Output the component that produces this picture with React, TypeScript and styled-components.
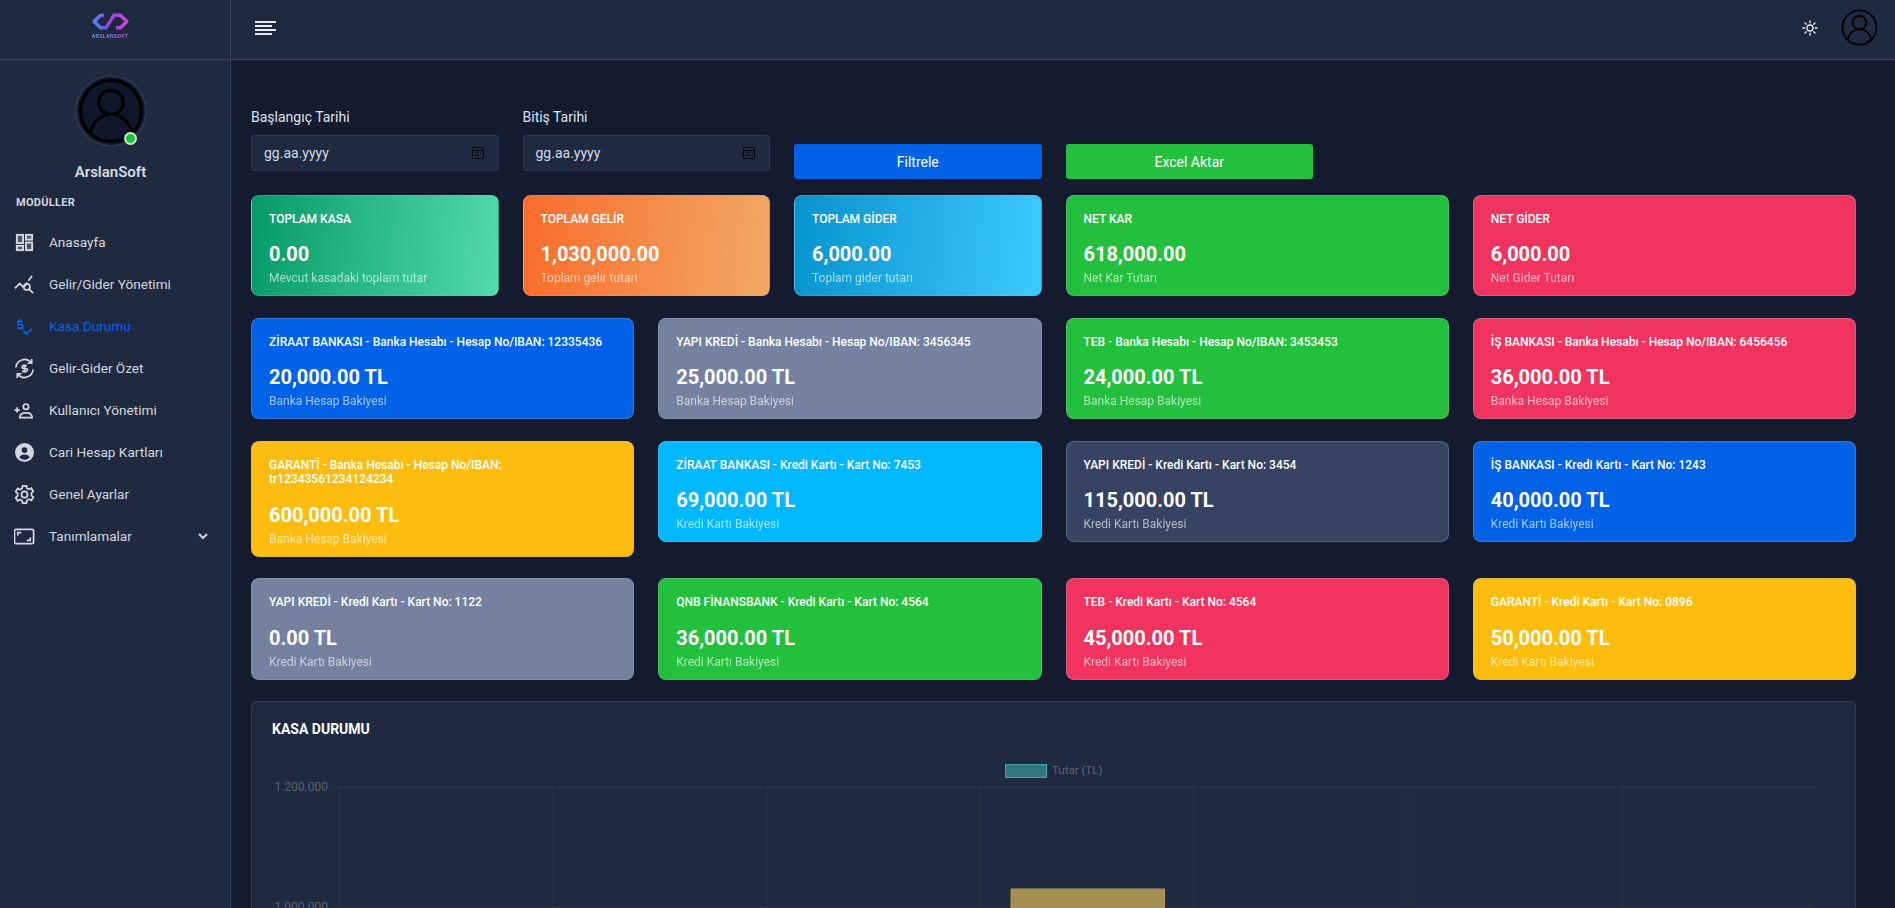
import React from 'react';
import styled, { createGlobalStyle } from 'styled-components';

const COLORS: Record<string, string> = {
  blue: '#0062e6',
  slate: '#74819f',
  green: '#23c03d',
  pink: '#f1345f',
  yellow: '#fdbd0e',
  cyan: '#00b8ff',
  navy: '#374362',
  kasa: 'linear-gradient(95deg, #079b6a 0%, #52d9a9 100%)',
  gelir: 'linear-gradient(95deg, #f96c2a 0%, #f1a865 100%)',
  gider: 'linear-gradient(95deg, #0793cd 0%, #3cc9fd 100%)',
};

const GlobalStyle = createGlobalStyle`
  html, body {
    margin: 0;
    height: 100%;
    overflow: hidden;
    background: #151b2f;
    font-family: Roboto, "Liberation Sans", sans-serif;
  }
  * { box-sizing: border-box; }
`;

const Layout = styled.div`
  display: flex;
  width: 1895px;
  height: 908px;
  overflow: hidden;
`;

const Sidebar = styled.aside`
  flex: 0 0 231px;
  background: #1f2a40;
  border-right: 1px solid #3a4459;
  color: #d3d7df;
`;

const LogoBar = styled.div`
  height: 60px;
  border-bottom: 1px solid #3a4459;
  display: flex;
  flex-direction: column;
  align-items: center;
  padding: 13px 10px 0 0;
`;

const LogoText = styled.span`
  font-size: 5px;
  font-weight: 700;
  letter-spacing: 0.5px;
  line-height: 6px;
  margin-top: 3px;
  background: linear-gradient(90deg, #5aa0f0, #c85ee8);
  -webkit-background-clip: text;
  background-clip: text;
  color: transparent;
`;

const Profile = styled.div`
  display: flex;
  flex-direction: column;
  align-items: center;
  padding: 15px 9px 0 0;
`;

const AvatarRing = styled.div`
  position: relative;
  width: 72px;
  height: 72px;
  border-radius: 50%;
  background: #10172a;
  border: 2px solid #2c3549;
  display: flex;
  align-items: center;
  justify-content: center;
`;

const OnlineDot = styled.span`
  position: absolute;
  right: 8px;
  bottom: 0;
  width: 13px;
  height: 13px;
  border-radius: 50%;
  background: #23c03d;
  border: 2px solid #cfe8d4;
`;

const ProfileName = styled.div`
  margin-top: 15px;
  font-size: 15px;
  font-weight: 600;
  line-height: 20px;
  color: #d9dce3;
`;

const SectionLabel = styled.div`
  margin: 14px 0 0 16px;
  font-size: 11px;
  line-height: 14px;
  font-weight: 700;
  letter-spacing: 0.3px;
  color: #d3d7df;
`;

const Nav = styled.nav`
  margin-top: 11px;
`;

const NavItem = styled.div<{ $active?: boolean }>`
  height: 42px;
  display: flex;
  align-items: center;
  padding-left: 14px;
  font-size: 13.6px;
  color: ${(p) => (p.$active ? '#0062e6' : '#d3d7df')};
`;

const NavIcon = styled.svg`
  width: 21px;
  height: 21px;
  flex: none;
  margin-right: 14px;
  fill: none;
  stroke: currentColor;
  stroke-width: 1.8;
`;

const Caret = styled.svg`
  width: 12px;
  height: 12px;
  margin-left: auto;
  margin-right: 21px;
  fill: none;
  stroke: currentColor;
  stroke-width: 2;
`;

const Main = styled.div`
  flex: 1;
  min-width: 0;
`;

const Topbar = styled.header`
  height: 60px;
  background: #1f2a40;
  border-bottom: 1px solid #3a4459;
  display: flex;
  align-items: center;
  padding: 0 17px 4px 24px;
`;

const MenuButton = styled.div`
  display: flex;
  flex-direction: column;
  gap: 2px;
  align-items: flex-start;
`;

const MenuLine = styled.span<{ $short?: boolean }>`
  display: block;
  height: 2px;
  width: ${(p) => (p.$short ? 17 : 21)}px;
  background: #e4e8f0;
`;

const TopIcons = styled.div`
  margin-left: auto;
  display: flex;
  align-items: center;
  gap: 23px;
`;

const Content = styled.main`
  padding: 0 39px 0 20px;
`;

const Grid = styled.div`
  display: grid;
  grid-template-columns: repeat(12, 1fr);
  column-gap: 24px;
  row-gap: 21.5px;
  align-items: start;
`;

const FilterRow = styled(Grid)`
  padding-top: 47px;
  margin-bottom: 16px;
  align-items: end;
`;

const Field = styled.div`
  grid-column: span 2;
  margin-bottom: 8px;
`;

const FieldLabel = styled.label`
  display: block;
  font-size: 14px;
  line-height: 20px;
  color: #dbe3f2;
  margin-bottom: 8px;
`;

const DateBox = styled.div`
  height: 36px;
  background: #1f2a40;
  border: 1px solid #2b3650;
  border-radius: 3px;
  display: flex;
  align-items: center;
  justify-content: space-between;
  padding: 0 14px 0 12px;
  font-size: 14px;
  color: #d5dcea;
`;

const ActionButton = styled.button<{ $color: string }>`
  grid-column: span 2;
  height: 35px;
  border: 0;
  border-radius: 3px;
  background: ${(p) => COLORS[p.$color]};
  color: #fff;
  font: 400 14px Roboto, sans-serif;
`;

const Card = styled.div<{ $color: string; $span: number }>`
  grid-column: span ${(p) => p.$span};
  background: ${(p) => COLORS[p.$color]};
  border: 1px solid rgba(170, 185, 210, 0.3);
  border-radius: 8px;
  padding: 16px 17px 9px;
  color: #fff;
`;

const CardTitle = styled.div`
  font-size: 12px;
  line-height: 14.4px;
  font-weight: 500;
`;

const CardValue = styled.div`
  margin-top: 16px;
  font-size: 20px;
  line-height: 24px;
  font-weight: 700;
`;

const CardNote = styled.div`
  margin-top: 4px;
  font-size: 12px;
  line-height: 16px;
  opacity: 0.62;
`;

const ChartCard = styled.section`
  margin-top: 21.5px;
  height: 300px;
  background: #1f2a40;
  border: 1px solid #363f55;
  border-radius: 6px;
  padding: 18px 20px;
`;

const ChartTitle = styled.h3`
  margin: 0;
  font-size: 14px;
  line-height: 18px;
  font-weight: 700;
  color: #fff;
`;

const ChartSvg = styled.svg`
  display: block;
  width: 1563px;
  height: 200px;
  margin: 1px 0 0 -20px;
`;

const AxisText = styled.text`
  font-family: Roboto, sans-serif;
  font-size: 12px;
  fill: #5d6470;
`;

const LegendText = styled(AxisText)`
  font-size: 11.5px;
`;

const LogoMark = () => (
  <svg width="37" height="17" viewBox="0 0 37 17" fill="none" strokeWidth="3.4" strokeLinejoin="round">
    <defs>
      <linearGradient id="logo-left" gradientUnits="userSpaceOnUse" x1="0" y1="0" x2="16" y2="0">
        <stop offset="0" stopColor="#4d8df5" />
        <stop offset="1" stopColor="#6d55e8" />
      </linearGradient>
      <linearGradient id="logo-right" gradientUnits="userSpaceOnUse" x1="13" y1="0" x2="37" y2="0">
        <stop offset="0" stopColor="#7a4fe0" />
        <stop offset="1" stopColor="#e23fd8" />
      </linearGradient>
    </defs>
    <path d="M12 2.200H8.500L2.200 8.500l6.300 6.300H15" stroke="url(#logo-left)" />
    <path d="M14 14.800L22 2.200h6.500l6.300 6.300-6.300 6.300H24" stroke="url(#logo-right)" />
  </svg>
);

const UserGlyph = ({ size }: { size: number }) => (
  <svg width={size} height={size} viewBox="0 0 38 38" fill="none" stroke="#000" strokeWidth="1.8">
    <circle cx="19" cy="19" r="17.5" />
    <circle cx="19" cy="14" r="7" />
    <path d="M7 31.500c1.500-6.500 6-10.500 12-10.500s10.500 4 12 10.500" />
  </svg>
);

const icons: Record<string, React.ReactNode> = {
  dashboard: (
    <g strokeWidth="2" fill="currentColor" fillOpacity="0.25">
      <rect x="3" y="3" width="6.5" height="8.5" />
      <rect x="12.5" y="3" width="6.5" height="5" />
      <rect x="3" y="14.5" width="6.5" height="4.5" />
      <rect x="12.5" y="11" width="6.5" height="8" />
    </g>
  ),
  search: (
    <>
      <path d="M1 15l5-5 4 4 4-5M15 7l4-5" />
      <circle cx="13.5" cy="13.5" r="3.2" />
      <path d="M16 16l4 4" />
    </>
  ),
  kasa: (
    <g strokeWidth="2">
      <path d="M9 5.500H4.200V9H8.800v3.500H3.500M6.200 3.500v2M6.200 12.500v2" />
      <path d="M9.500 15.500l3.500 3.500 5.500-5.500" />
    </g>
  ),
  exchange: (
    <>
      <path d="M2 10a9 9 0 0 1 16-5M20 12a9 9 0 0 1-16 5" />
      <path d="M18.500 1v4.500H14M3.500 21v-4.500H8" />
      <path d="M13.500 8H10a1.500 1.500 0 0 0 0 3h2.500a1.500 1.500 0 0 1 0 3H8.500M11 6.500v9" />
    </>
  ),
  addUser: (
    <>
      <circle cx="12.5" cy="7" r="2.8" />
      <path d="M6 18.500c0-3.500 3-5 6.500-5s6.500 1.500 6.500 5zM.5 10.500H6M3.200 7.700v5.500" />
    </>
  ),
  account: (
    <>
      <circle cx="11" cy="11" r="9" fill="currentColor" />
      <circle cx="11" cy="8.500" r="3" fill="#1f2a40" stroke="none" />
      <path d="M5.500 16c1-2 3-3 5.500-3s4.500 1 5.500 3a7 7 0 0 1-11 0z" fill="#1f2a40" stroke="none" />
    </>
  ),
  settings: (
    <>
      <circle cx="11" cy="11" r="3.2" />
      <path d="M9 2h4l.6 2.600 2.200 1 2.400-1.200 2 3.400-2 1.800v2.400l2 1.800-2 3.400-2.400-1.200-2.200 1L13 20H9l-.6-2.600-2.200-1-2.400 1.200-2-3.400 2-1.800V9.800L1.800 8l2-3.400 2.400 1.200 2.200-1z" />
    </>
  ),
  frame: (
    <>
      <rect x="0.5" y="3.5" width="20" height="15" rx="1.5" />
      <path d="M4 10V7h3.500M17 12v3h-3.500" />
    </>
  ),
};

const navItems = [
  { icon: 'dashboard', label: 'Anasayfa' },
  { icon: 'search', label: 'Gelir/Gider Yönetimi' },
  { icon: 'kasa', label: 'Kasa Durumu', active: true },
  { icon: 'exchange', label: 'Gelir-Gider Özet' },
  { icon: 'addUser', label: 'Kullanıcı Yönetimi' },
  { icon: 'account', label: 'Cari Hesap Kartları' },
  { icon: 'settings', label: 'Genel Ayarlar' },
  { icon: 'frame', label: 'Tanımlamalar', caret: true },
];

const summaryCards = [
  { color: 'kasa', span: 2, title: 'TOPLAM KASA', value: '0.00', note: 'Mevcut kasadaki toplam tutar' },
  { color: 'gelir', span: 2, title: 'TOPLAM GELİR', value: '1,030,000.00', note: 'Toplam gelir tutarı' },
  { color: 'gider', span: 2, title: 'TOPLAM GİDER', value: '6,000.00', note: 'Toplam gider tutarı' },
  { color: 'green', span: 3, title: 'NET KAR', value: '618,000.00', note: 'Net Kar Tutarı' },
  { color: 'pink', span: 3, title: 'NET GİDER', value: '6,000.00', note: 'Net Gider Tutarı' },
];

const BANK = 'Banka Hesap Bakiyesi';
const CREDIT = 'Kredi Kartı Bakiyesi';

const accountCards = [
  { color: 'blue', title: 'ZİRAAT BANKASI - Banka Hesabı - Hesap No/IBAN: 12335436', value: '20,000.00 TL', note: BANK },
  { color: 'slate', title: 'YAPI KREDİ - Banka Hesabı - Hesap No/IBAN: 3456345', value: '25,000.00 TL', note: BANK },
  { color: 'green', title: 'TEB - Banka Hesabı - Hesap No/IBAN: 3453453', value: '24,000.00 TL', note: BANK },
  { color: 'pink', title: 'İŞ BANKASI - Banka Hesabı - Hesap No/IBAN: 6456456', value: '36,000.00 TL', note: BANK },
  { color: 'yellow', title: 'GARANTİ - Banka Hesabı - Hesap No/IBAN: tr12343561234124234', value: '600,000.00 TL', note: BANK },
  { color: 'cyan', title: 'ZİRAAT BANKASI - Kredi Kartı - Kart No: 7453', value: '69,000.00 TL', note: CREDIT },
  { color: 'navy', title: 'YAPI KREDİ - Kredi Kartı - Kart No: 3454', value: '115,000.00 TL', note: CREDIT },
  { color: 'blue', title: 'İŞ BANKASI - Kredi Kartı - Kart No: 1243', value: '40,000.00 TL', note: CREDIT },
  { color: 'slate', title: 'YAPI KREDİ - Kredi Kartı - Kart No: 1122', value: '0.00 TL', note: CREDIT },
  { color: 'green', title: 'QNB FİNANSBANK - Kredi Kartı - Kart No: 4564', value: '36,000.00 TL', note: CREDIT },
  { color: 'pink', title: 'TEB - Kredi Kartı - Kart No: 4564', value: '45,000.00 TL', note: CREDIT },
  { color: 'yellow', title: 'GARANTİ - Kredi Kartı - Kart No: 0896', value: '50,000.00 TL', note: CREDIT },
];

const gridXs = [339, 553, 767, 980.5, 1194, 1408, 1622, 1835];

const DateField = ({ label }: { label: string }) => (
  <Field>
    <FieldLabel>{label}</FieldLabel>
    <DateBox>
      gg.aa.yyyy
      <svg width="12" height="12" viewBox="0 0 12 12" fill="none" stroke="#05070d" strokeWidth="1">
        <rect x="0.5" y="0.5" width="11" height="11" rx="1" />
        <path d="M.5 3.500h11M3 6h1.500M5.500 6H7M8 6h1.500M3 8.500h1.500M5.500 8.500H7" />
      </svg>
    </DateBox>
  </Field>
);

const StatCard = ({ color, span, title, value, note }: { color: string; span: number; title: string; value: string; note: string }) => (
  <Card $color={color} $span={span}>
    <CardTitle>{title}</CardTitle>
    <CardValue>{value}</CardValue>
    <CardNote>{note}</CardNote>
  </Card>
);

const App = () => (
  <Layout>
    <GlobalStyle />
    <Sidebar>
      <LogoBar>
        <LogoMark />
        <LogoText>ARSLANSOFT</LogoText>
      </LogoBar>
      <Profile>
        <AvatarRing>
          <UserGlyph size={66} />
          <OnlineDot />
        </AvatarRing>
        <ProfileName>ArslanSoft</ProfileName>
      </Profile>
      <SectionLabel>MODÜLLER</SectionLabel>
      <Nav>
        {navItems.map((item) => (
          <NavItem key={item.label} $active={item.active}>
            <NavIcon viewBox="0 0 22 22">{icons[item.icon]}</NavIcon>
            {item.label}
            {item.caret && (
              <Caret viewBox="0 0 12 12">
                <path d="M2 4l4 4 4-4" />
              </Caret>
            )}
          </NavItem>
        ))}
      </Nav>
    </Sidebar>
    <Main>
      <Topbar>
        <MenuButton>
          <MenuLine />
          <MenuLine $short />
          <MenuLine />
          <MenuLine $short />
        </MenuButton>
        <TopIcons>
          <svg width="16" height="16" viewBox="0 0 16 16" fill="none" stroke="#e4e8f0" strokeWidth="1.3" strokeLinecap="round">
            <circle cx="8" cy="8" r="3" />
            <path d="M8 .8v2M8 13.200v2M.8 8h2M13.200 8h2M2.900 2.900l1.400 1.400M11.700 11.700l1.400 1.400M2.900 13.100l1.400-1.400M11.700 4.300l1.400-1.400" />
          </svg>
          <UserGlyph size={37} />
        </TopIcons>
      </Topbar>
      <Content>
        <FilterRow>
          <DateField label="Başlangıç Tarihi" />
          <DateField label="Bitiş Tarihi" />
          <ActionButton $color="blue">Filtrele</ActionButton>
          <ActionButton $color="green">Excel Aktar</ActionButton>
        </FilterRow>
        <Grid>
          {summaryCards.map((card) => (
            <StatCard key={card.title} {...card} />
          ))}
          {accountCards.map((card) => (
            <StatCard key={card.title} span={3} {...card} />
          ))}
        </Grid>
        <ChartCard>
          <ChartTitle>KASA DURUMU</ChartTitle>
          <ChartSvg viewBox="252 740 1563 200">
            <rect x="1005.5" y="765.5" width="41" height="13" fill="rgba(75,192,192,.5)" stroke="#3fa7ad" />
            <LegendText x="1052" y="775">Tutar (TL)</LegendText>
            {[788, 908].map((y) => (
              <line key={y} x1="331" x2="1835" y1={y} y2={y} stroke="#2a3442" />
            ))}
            {gridXs.map((x) => (
              <line key={x} x1={x} x2={x} y1="788" y2="940" stroke="#2a3442" />
            ))}
            <rect x="1011" y="890" width="153.5" height="60" fill="#a38f52" stroke="#b09a58" />
            <AxisText x="328" y="792" textAnchor="end">1.200.000</AxisText>
            <AxisText x="328" y="912" textAnchor="end">1.000.000</AxisText>
          </ChartSvg>
        </ChartCard>
      </Content>
    </Main>
  </Layout>
);

export default App;
